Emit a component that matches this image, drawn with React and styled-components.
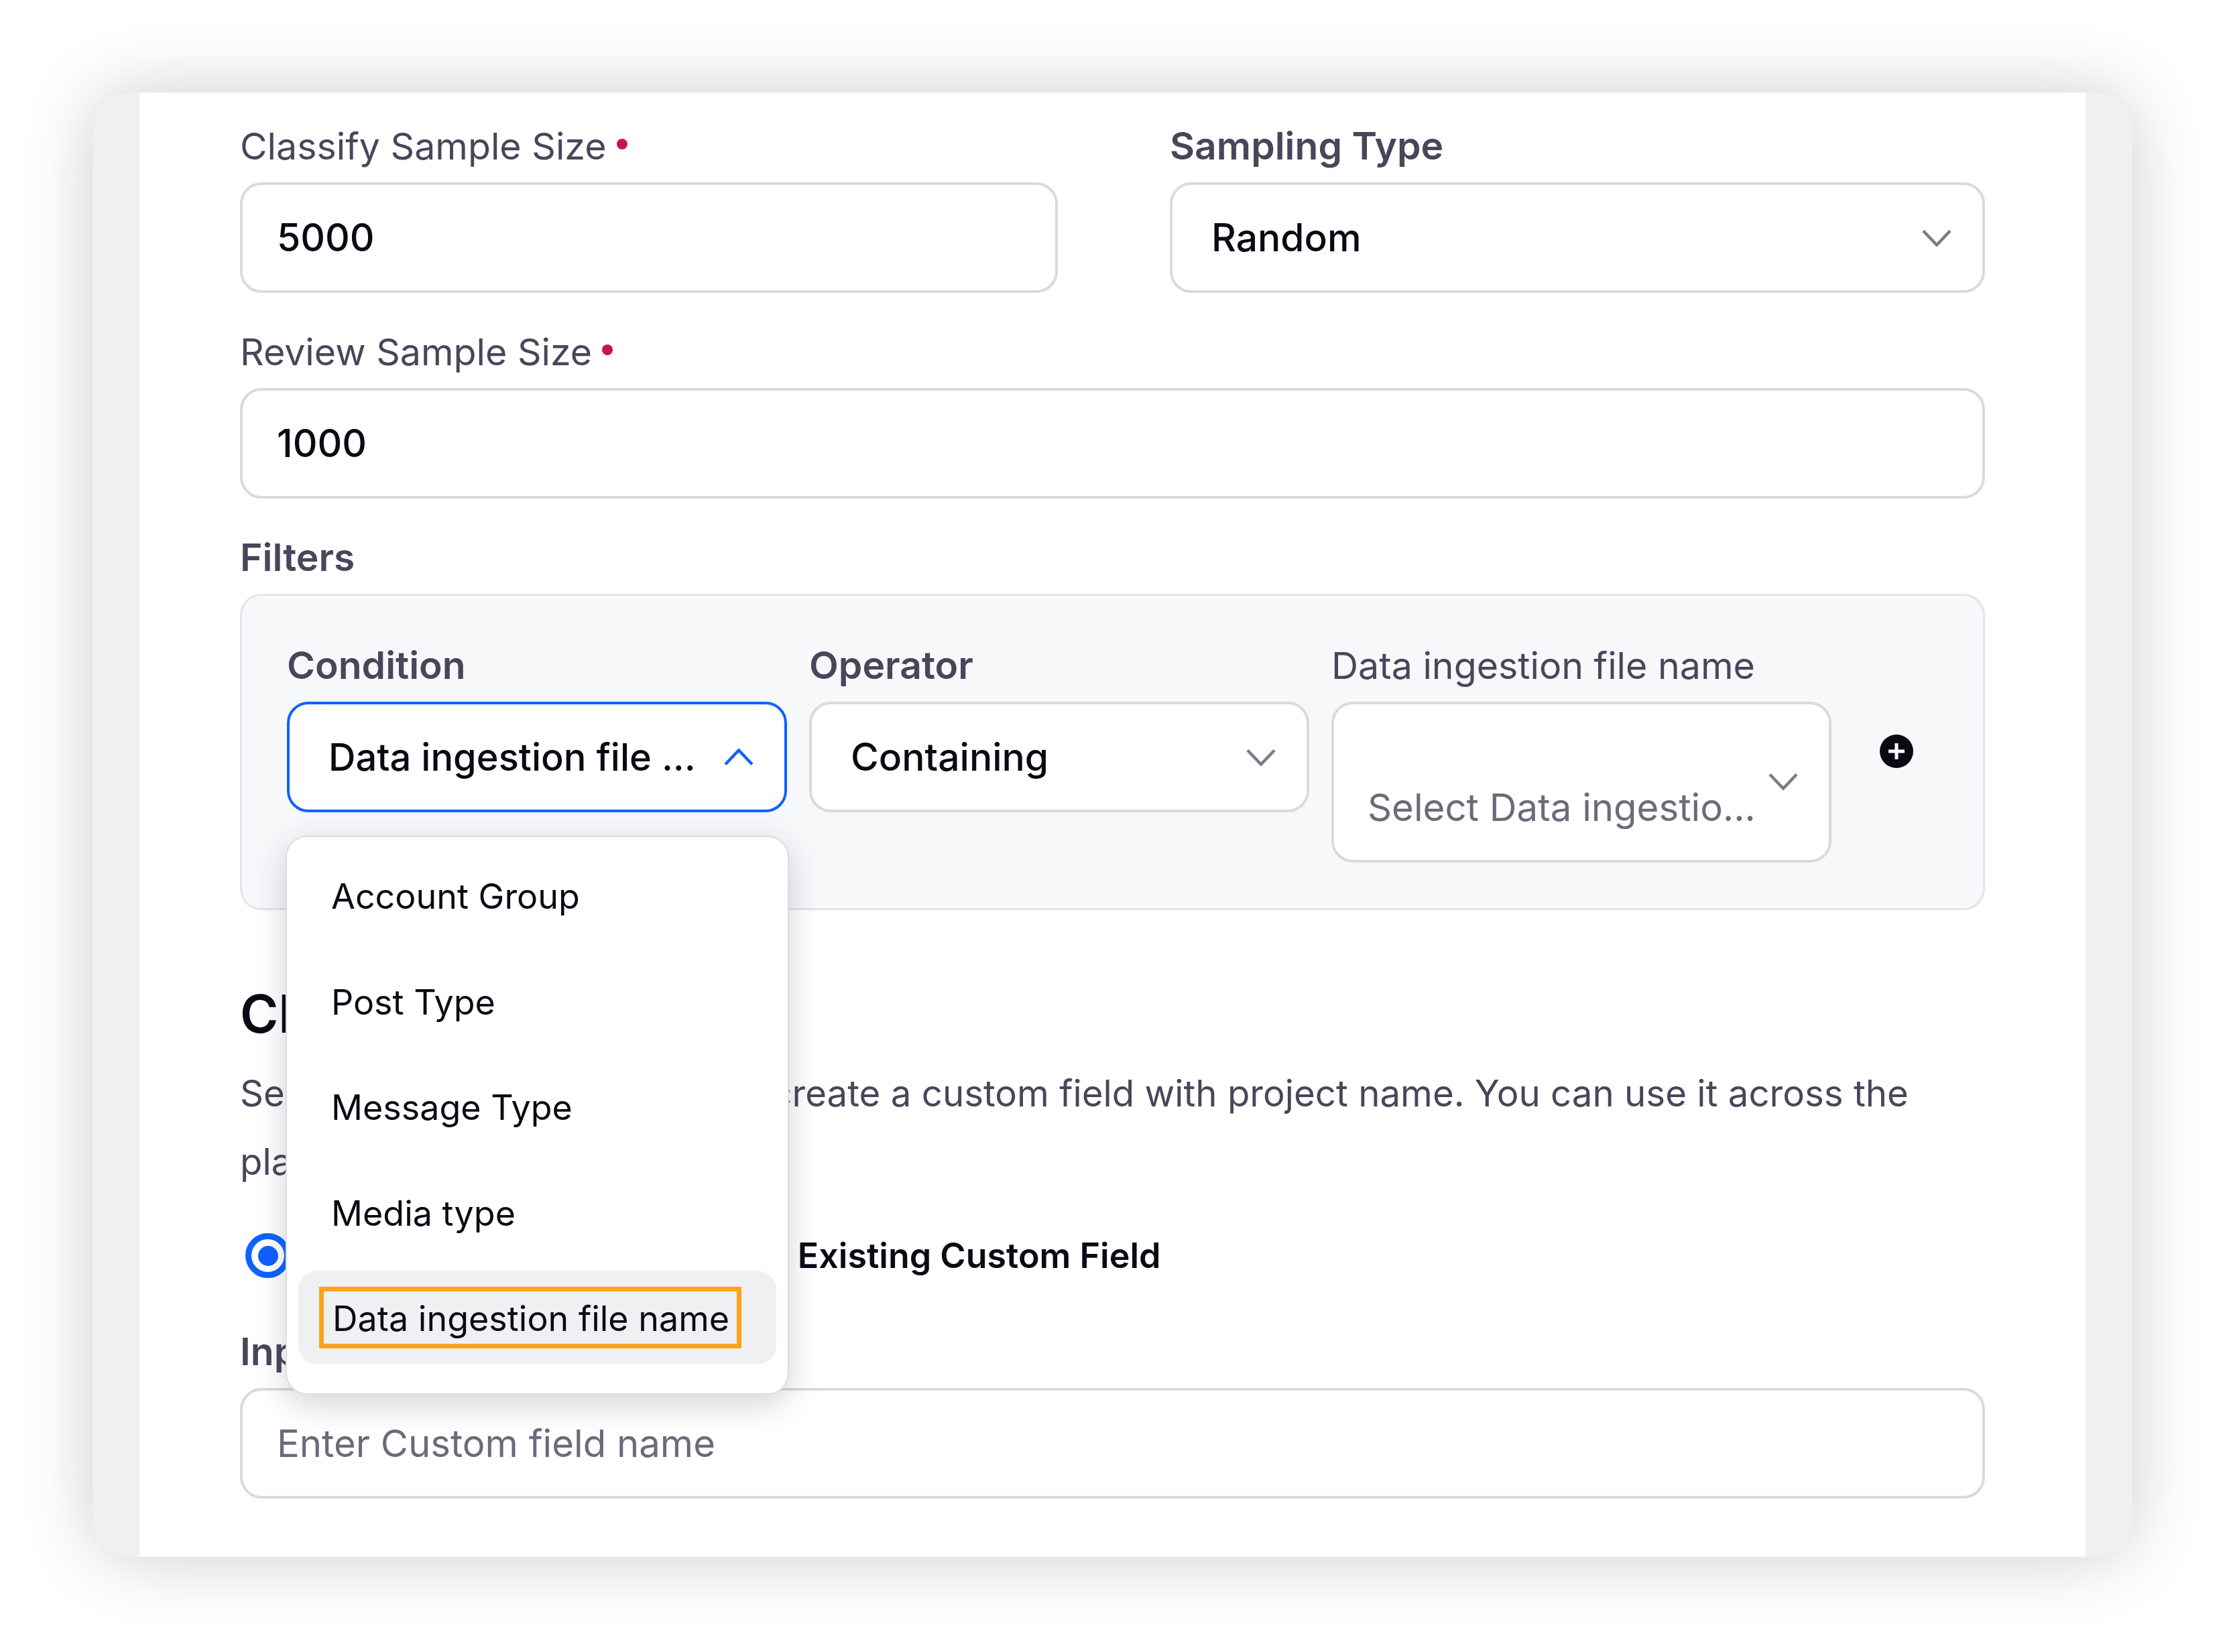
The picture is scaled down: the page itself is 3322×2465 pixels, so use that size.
import React from 'react';
import styled, { createGlobalStyle } from 'styled-components';

const Global = createGlobalStyle`
  html, body { margin: 0; padding: 0; background: #fff; }
  body { font-family: Inter, "Liberation Sans", sans-serif; -webkit-font-smoothing: antialiased; }
`;
const Page = styled.div`
  width: 3322px; height: 2465px; box-sizing: border-box; padding: 138px 141px 142px 138px; overflow: hidden;
`;
const Frame = styled.div`
  height: 2185px; background: #eff0f2; border-radius: 60px; padding: 0 70px;
  box-shadow: 0 0 110px rgba(0,0,0,.2);
`;
const Panel = styled.div`
  background: #fff; height: 100%; box-sizing: border-box; padding: 48px 150px 88px;
  display: flex; flex-direction: column;
`;
const Split = styled.div`
  display: grid; grid-template-columns: 1220px 1fr; column-gap: 167px;
`;
const Field = styled.div`
  display: flex; flex-direction: column; gap: 22px; margin-top: ${p => p.$top || 0}px; position: relative;
`;
const Label = styled.div`
  font-size: ${p => p.$strong ? 57 : 55.5}px; line-height: 64px; height: 64px; color: #46475a; font-weight: ${p => p.$strong ? 600 : 400};
  white-space: nowrap; display: flex; align-items: center;
`;
const Req = styled.span`
  width: 16px; height: 16px; border-radius: 50%; background: #c8105c; margin-left: 15px; margin-top: -6px;
`;
const Box = styled.div`
  box-sizing: border-box; height: ${p => p.$h || 165}px; background: #fff; border-radius: 32px;
  border: ${p => p.$active ? '4.5px solid #0f62fe' : '4px solid #d9dadc'};
  display: flex; align-items: ${p => p.$end ? 'flex-end' : 'center'}; justify-content: space-between;
  padding: ${p => p.$pad || '0 46px 0 58px'};
  font-size: ${p => p.$muted ? 56.3 : p.$active ? 56 : 57}px; font-weight: ${p => p.$muted ? 400 : 500};
  color: ${p => p.$muted ? '#6a6b7a' : '#0a0a14'}; white-space: nowrap; position: relative;
`;
const Chevron = styled.svg`
  width: 44px; height: 26px; flex: none; fill: none; stroke: ${p => p.$c || '#7a7b8a'}; stroke-width: 4.5;
  margin-bottom: ${p => p.$mb || 0}px;
`;
const FilterBox = styled.div`
  box-sizing: border-box; height: 472px; background: #f7f8fa; border: 3.5px solid #e4e5e8; border-radius: 32px;
  padding: 72px 0 0 67px; display: flex; align-items: flex-start;
`;
const Col = styled.div`
  width: 746px; margin-right: 33px; display: flex; flex-direction: column; gap: 22px; position: relative; flex: none;
`;
const Plus = styled.svg`
  width: 50px; height: 50px; flex: none; margin: 135px 0 0 39px;
`;
const Menu = styled.div`
  position: absolute; left: 0; top: 288px; width: 747px; height: 830px; box-sizing: border-box;
  background: #fff; border-radius: 30px; padding: 10px 17px; z-index: 5;
  box-shadow: 0 0 0 2px #dcdce2, 0 14px 50px rgba(40,40,60,.22);
`;
const Item = styled.div`
  height: 157.5px; display: flex; align-items: center; font-size: 52px; color: #0a0a14; padding-left: 49px;
  white-space: nowrap; box-sizing: border-box;
`;
const ActiveItem = styled.div`
  height: 140px; margin-top: 7px; background: #eff0f2; border-radius: 28px; display: flex; align-items: center;
  padding-left: 31px;
`;
const Marked = styled.span`
  border: 7px solid #fca31e; height: 92px; box-sizing: border-box; width: 630px; display: flex; align-items: center;
  padding: 2px 0 0 13px; font-size: 52px; color: #0a0a14; white-space: nowrap;
`;
const Heading = styled.div`
  font-size: 78px; line-height: 100px; font-weight: 600; color: #0a0a14; margin-top: 105px;
`;
const Para = styled.div`
  font-size: 54.6px; line-height: 102px; color: #46475a; margin-top: 17px;
`;
const RadioRow = styled.div`
  display: flex; align-items: center; margin-top: 56px; height: 67px; margin-left: 8px; margin-bottom: -2px;
`;
const RadioOption = styled.div`
  display: flex; align-items: center; gap: 22px; font-size: 52px; font-weight: 600; color: #0a0a14; white-space: nowrap;
  margin-right: ${p => p.$mr || 0}px;
`;
const Radio = styled.span`
  width: 67px; height: 67px; box-sizing: border-box; border-radius: 50%; flex: none;
  border: ${p => p.$on ? '9px solid #0f62fe' : '4px solid #bbb'}; background: #fff; display: flex; align-items: center; justify-content: center;
  &::after { content: ''; width: 30px; height: 30px; border-radius: 50%; background: ${p => p.$on ? '#0f62fe' : 'transparent'}; }
`;

const Down = ({ c, mb }) => (
  <Chevron viewBox="0 0 44 26" $c={c} $mb={mb}><path d="M2 2.5 L22 23.5 L42 2.5" /></Chevron>
);
const Up = () => (
  <Chevron viewBox="0 0 44 26" $c="#0f62fe"><path d="M2 23.5 L22 2.5 L42 23.5" /></Chevron>
);

const textPad = '0 46px 0 51px';

export default function App() {
  return (
    <Page>
      <Global />
      <Frame>
        <Panel>
          <Split>
            <Field>
              <Label>Classify Sample Size<Req /></Label>
              <Box $pad={textPad}>5000</Box>
            </Field>
            <Field>
              <Label $strong>Sampling Type</Label>
              <Box>Random<Down /></Box>
            </Field>
          </Split>
          <Field $top={56}>
            <Label>Review Sample Size<Req /></Label>
            <Box $pad={textPad}>1000</Box>
          </Field>
          <Field $top={56}>
            <Label $strong>Filters</Label>
            <FilterBox>
              <Col>
                <Label $strong>Condition</Label>
                <Box $active>Data ingestion file ...<Up /></Box>
                <Menu>
                  <Item>Account Group</Item>
                  <Item>Post Type</Item>
                  <Item>Message Type</Item>
                  <Item>Media type</Item>
                  <ActiveItem><Marked>Data ingestion file name</Marked></ActiveItem>
                </Menu>
              </Col>
              <Col>
                <Label $strong>Operator</Label>
                <Box>Containing<Down /></Box>
              </Col>
              <Col>
                <Label>Data ingestion file name</Label>
                <Box $h={240} $end $muted $pad="0 46px 44px 50px">Select Data ingestio...<Down mb={60} /></Box>
              </Col>
              <Plus viewBox="0 0 50 50">
                <circle cx="25" cy="25" r="25" fill="#0a0a14" />
                <path d="M25 13V37M13 25H37" stroke="#fff" strokeWidth="5" />
              </Plus>
            </FilterBox>
          </Field>
          <Heading>Classify</Heading>
          <Para>Select existing custom field or create a custom field with project name. You can use it across the platform.</Para>
          <RadioRow>
            <RadioOption $mr={352}><Radio $on />Create New</RadioOption>
            <RadioOption><Radio />Existing Custom Field</RadioOption>
          </RadioRow>
          <Field $top={80}>
            <Label $strong>Input Custom Field Name</Label>
            <Box $muted $pad={textPad}>Enter Custom field name</Box>
          </Field>
        </Panel>
      </Frame>
    </Page>
  );
}
